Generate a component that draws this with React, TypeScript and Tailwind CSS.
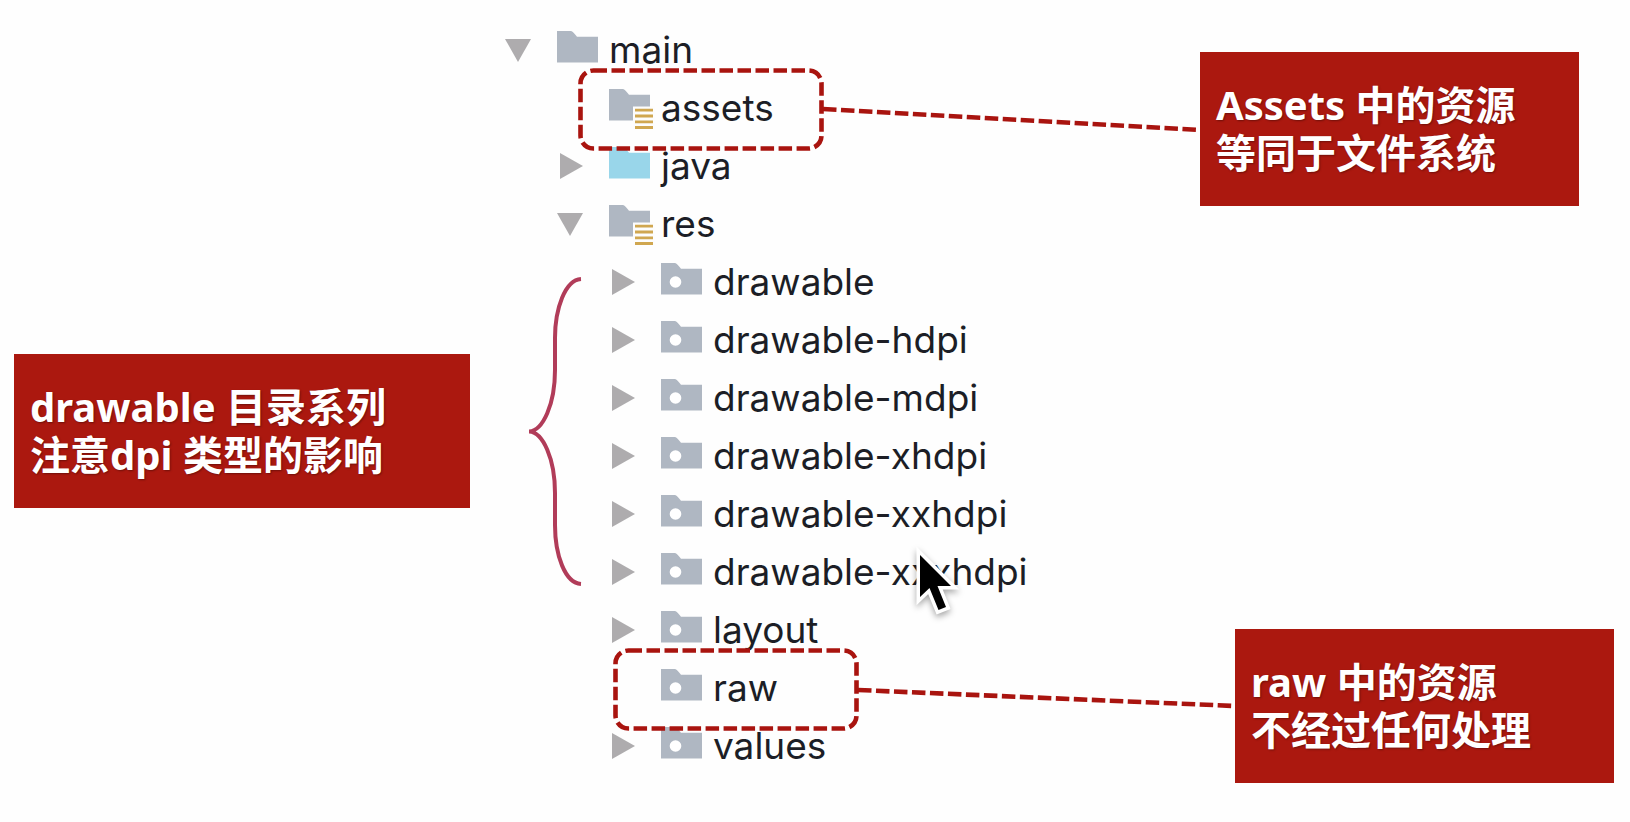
import { useState } from "react";

type IconKind = "plain" | "source" | "resource" | "package";

type TreeItem = {
  name: string;
  icon: IconKind;
  children?: TreeItem[];
  expandable?: boolean;
  highlight?: string;
  braced?: boolean;
  pointer?: boolean;
};

const project: TreeItem = {
  name: "main",
  icon: "plain",
  children: [
    { name: "assets", icon: "resource", highlight: "left-[21px]" },
    { name: "java", icon: "source", expandable: true },
    {
      name: "res",
      icon: "resource",
      braced: true,
      children: [
        { name: "drawable", icon: "package", expandable: true },
        { name: "drawable-hdpi", icon: "package", expandable: true },
        { name: "drawable-mdpi", icon: "package", expandable: true },
        { name: "drawable-xhdpi", icon: "package", expandable: true },
        { name: "drawable-xxhdpi", icon: "package", expandable: true },
        { name: "drawable-xxxhdpi", icon: "package", expandable: true, pointer: true },
        { name: "layout", icon: "package", expandable: true },
        { name: "raw", icon: "package", highlight: "left-1" },
        { name: "values", icon: "package", expandable: true },
      ],
    },
  ],
};

function FolderIcon({ kind }: { kind: IconKind }) {
  return (
    <svg width="46" height="42" viewBox="0 0 46 42" className="shrink-0" aria-hidden="true">
      <path
        d="M0 2H13.5C15 2 16 3 20 7.7H41V33.5H0Z"
        fill={kind === "source" ? "#99d6ea" : "#afb7c2"}
      />
      {kind === "package" && <circle cx="14.5" cy="21" r="5.8" fill="#fff" />}
      {kind === "resource" && (
        <>
          <path d="M24 19.5H46V42H24Z" fill="#fdfdfd" />
          <path d="M26 23.2H44M26 29H44M26 34.8H44M26 40.5H44" stroke="#d0a750" strokeWidth="2.8" />
        </>
      )}
    </svg>
  );
}

function Arrow({ open }: { open: boolean }) {
  return (
    <svg width="26" height="26" viewBox="0 0 26 26" aria-hidden="true">
      <path d={open ? "M0 2H26L13 25Z" : "M3 0L26 13L3 26Z"} fill="#aeacae" />
    </svg>
  );
}

function DashedFrame({ className }: { className: string }) {
  return (
    <svg
      width="246"
      height="83"
      viewBox="0 0 246 83"
      className={`pointer-events-none absolute -top-[11px] z-10 ${className}`}
      aria-hidden="true"
    >
      <rect
        x="2.5"
        y="2.5"
        width="241"
        height="78"
        rx="13"
        fill="none"
        stroke="#a9140f"
        strokeWidth="4.6"
        strokeDasharray="13.5 4.5"
      />
    </svg>
  );
}

function Brace() {
  return (
    <svg
      width="54"
      height="312"
      viewBox="0 0 54 312"
      className="absolute top-[23px] -left-20"
      aria-hidden="true"
    >
      <path
        d="M52 3C36 4 26 33 26 62V94C26 128 14 155 0 155.500C14 156 26 183 26 217V249C26 279 36 307 52 308"
        fill="none"
        stroke="#b13c59"
        strokeWidth="4"
      />
    </svg>
  );
}

function Pointer() {
  return (
    <svg
      width="50"
      height="76"
      viewBox="-8 -10 50 76"
      className="pointer-events-none absolute top-0.5 left-[303px] z-10 drop-shadow-[0_3px_3px_rgba(0,0,0,0.35)]"
      aria-hidden="true"
    >
      <path
        d="M0 0V42L9.500 33L18.500 55L26 52L17.500 31H31Z"
        fill="#000"
        stroke="#fff"
        strokeWidth="7"
        paintOrder="stroke"
      />
    </svg>
  );
}

function TreeNode({ item }: { item: TreeItem }) {
  const [open, setOpen] = useState(Boolean(item.children));
  const expandable = Boolean(item.children) || item.expandable;

  return (
    <li>
      <div className="relative flex h-[58px] items-center">
        {expandable ? (
          <button
            type="button"
            aria-expanded={open}
            aria-label={item.name}
            onClick={() => setOpen(!open)}
            className="mr-[26px] shrink-0"
          >
            <Arrow open={open} />
          </button>
        ) : (
          <span className="mr-[26px] w-[26px] shrink-0" />
        )}
        <FolderIcon kind={item.icon} />
        <span className="pl-1.5 text-[37px] leading-[48px] whitespace-nowrap text-[#1c1e26]">
          {item.name}
        </span>
        {item.highlight && <DashedFrame className={item.highlight} />}
        {item.pointer && <Pointer />}
      </div>
      {open && item.children && (
        <ul className="relative pl-[52px]">
          {item.braced && (
            <li className="absolute top-0 left-[52px]" aria-hidden="true">
              <Brace />
            </li>
          )}
          {item.children.map((child) => (
            <TreeNode key={child.name} item={child} />
          ))}
        </ul>
      )}
    </li>
  );
}

function Callout({ text, className }: { text: string; className: string }) {
  return (
    <p
      className={`shrink-0 bg-[#ab180f] px-4 py-[29px] font-['Noto_Sans','Noto_Sans_CJK_SC',sans-serif] text-[40px] leading-[48px] font-bold whitespace-pre text-white text-shadow-[1px_1px_2px_rgba(0,0,0,0.35)] ${className}`}
    >
      {text}
    </p>
  );
}

function Connector({ drop, className }: { drop: number; className: string }) {
  return (
    <svg
      viewBox="0 0 377 28"
      preserveAspectRatio="none"
      className={`h-7 min-w-0 flex-1 ${className}`}
      aria-hidden="true"
    >
      <line
        x1="0"
        y1="3"
        x2="377"
        y2={3 + drop}
        stroke="#a9140f"
        strokeWidth="4.6"
        strokeDasharray="13.5 4.5"
      />
    </svg>
  );
}

export default function App() {
  return (
    <main
      lang="zh-CN"
      className="flex min-h-screen items-start bg-[#fefefe] pl-3.5 font-[Inter,'Noto_Sans_CJK_SC',sans-serif]"
    >
      <Callout
        text={"drawable 目录系列\n注意dpi 类型的影响"}
        className="mt-[354px] w-[456px]"
      />
      <ul className="ml-[35px] w-[318px] shrink-0 pt-[21px] pb-[47px]">
        <TreeNode item={project} />
      </ul>
      <section className="flex min-w-0 flex-1 flex-col justify-between self-stretch pt-[52px] pb-[39px]">
        <div className="flex items-start pr-[51px]">
          <Connector drop={21} className="mt-[54px]" />
          <Callout text={"Assets 中的资源\n等同于文件系统"} className="w-[379px]" />
        </div>
        <div className="flex items-start pr-4 pl-[35px]">
          <Connector drop={16} className="mt-[58px]" />
          <Callout text={"raw 中的资源\n不经过任何处理"} className="w-[379px]" />
        </div>
      </section>
    </main>
  );
}
